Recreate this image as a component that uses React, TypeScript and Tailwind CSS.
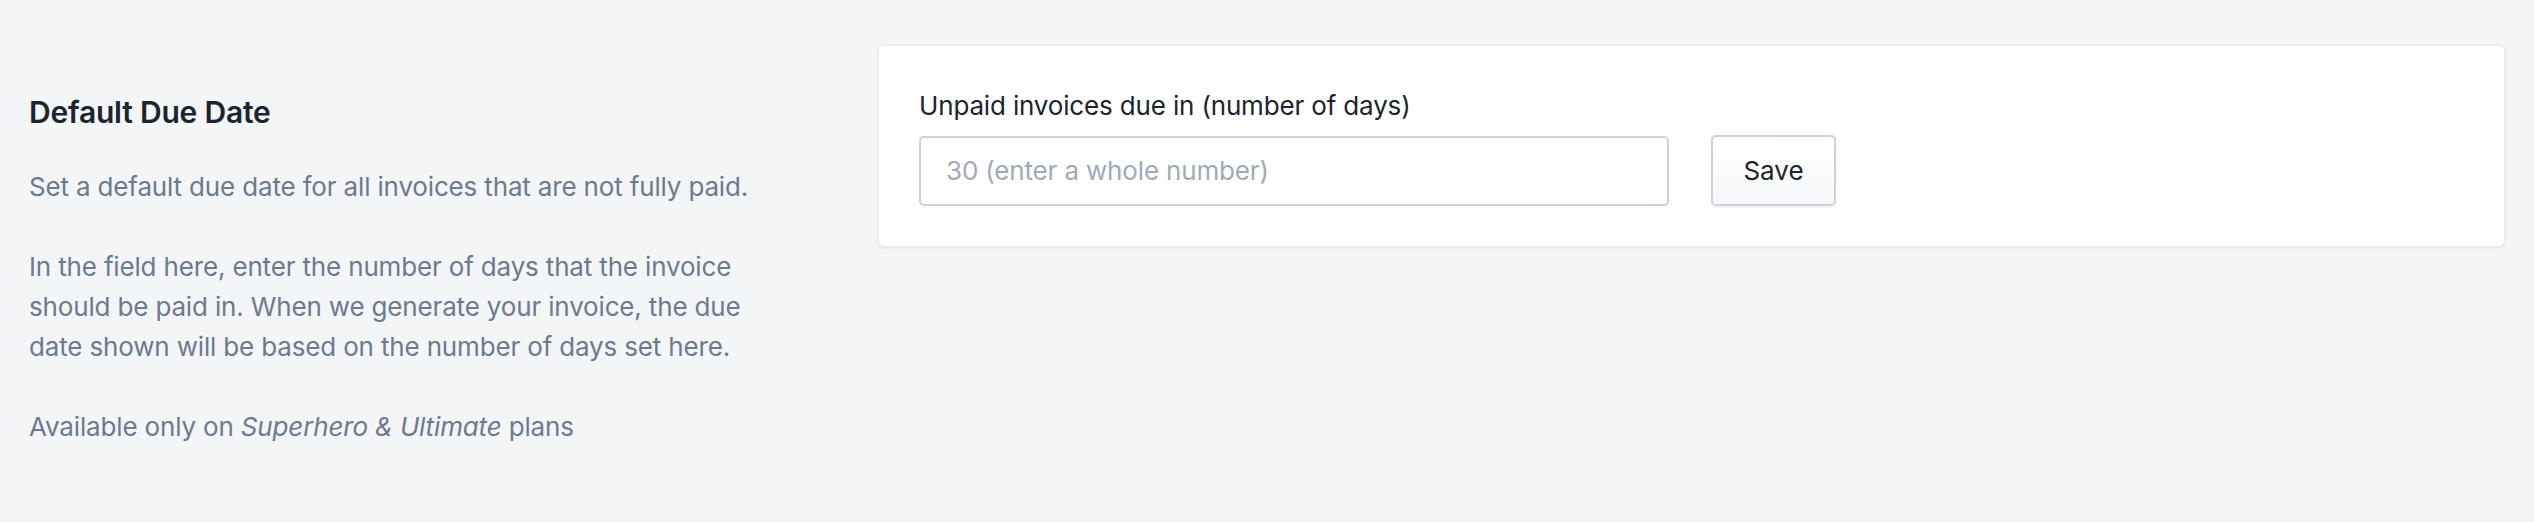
export default function App() {
  return (
    <main
      className="min-h-screen bg-[#f4f5f7] px-[29px] py-[45px]"
      style={{ fontFamily: 'Inter, "Noto Sans", sans-serif' }}
    >
      <div className="flex gap-[71px] items-start">
        {/* description column */}
        <div className="w-[778px] shrink-0 pt-[47px] pr-[24px]">
          <h2 className="text-[30px] leading-[40px] font-semibold text-[#1c2430] tracking-[-0.2px]">
            Default Due Date
          </h2>
          <div className="mt-[35px] text-[26px] leading-[40px] text-[#6b7a8f] tracking-[-0.16px] space-y-[40px]">
            <p>Set a default due date for all invoices that are not fully paid.</p>
            <p>
              In the field here, enter the number of days that the invoice should be paid in. When we
              generate your invoice, the due date shown will be based on the number of days set here.
            </p>
            <p>
              Available only on <em>Superhero &amp; Ultimate</em> plans
            </p>
          </div>
        </div>

        {/* settings card */}
        <div className="flex-1 bg-white rounded-[6px] border border-[#e8ebef] shadow-[0_1px_3px_rgba(0,0,0,0.08)] p-[40px]">
          <label className="block text-[26px] leading-[40px] text-[#1c2430] tracking-[-0.16px]">
            Unpaid invoices due in (number of days)
          </label>
          <div className="mt-[9px] flex items-center gap-[42px]">
            <input
              type="text"
              placeholder="30 (enter a whole number)"
              className="w-[750px] h-[70px] rounded-[5px] border-2 border-[#cdd3dc] bg-white px-[25px] text-[26px] tracking-[-0.16px] text-[#1c2430] placeholder:text-[#a0aab8] outline-none"
            />
            <button className="h-[71px] w-[125px] rounded-[5px] border-2 border-[#cdd3dc] bg-gradient-to-b from-white to-[#f6f7f9] text-[26px] text-[#1c2430] shadow-[0_2px_2px_rgba(0,0,0,0.06)]">
              Save
            </button>
          </div>
        </div>
      </div>
    </main>
  )
}
